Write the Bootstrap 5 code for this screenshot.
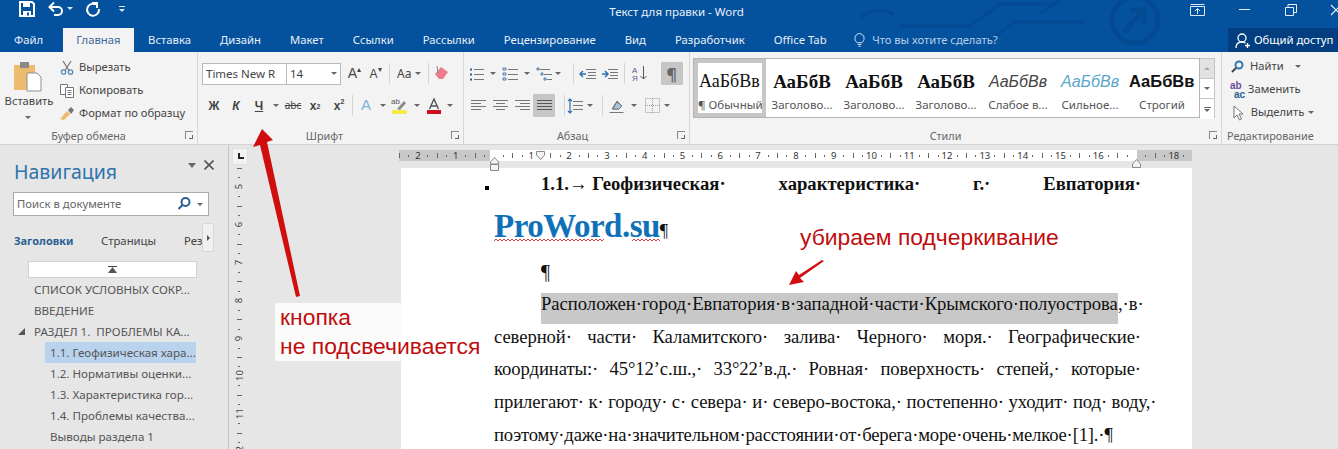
<!DOCTYPE html>
<html lang="ru"><head><meta charset="utf-8"><title>Текст для правки - Word</title>
<link rel="stylesheet" href="https://cdn.jsdelivr.net/npm/bootstrap@5.3.0/dist/css/bootstrap.min.css">
<style>
html,body{margin:0;width:1338px;height:449px;overflow:hidden;background:#e6e6e6;font-family:"Noto Sans","Open Sans",sans-serif;font-size:11.2px;color:#444}
.app{position:relative;width:1338px;height:449px;overflow:hidden}
.hdr{position:relative;height:52px;background:#04519d;color:#e9f0f8}
.hdr-art{position:absolute;left:0;top:0;pointer-events:none}
.trow{position:relative;height:26px}
.qat{width:200px;padding:0 0 9px 19px;gap:12px}
.ttl{flex:1;text-align:center;font-size:11.5px;line-height:23px;padding-left:3px}
.winb{width:188px}
.winb span{position:absolute;top:1px}
.tabs{position:relative;height:26px;padding-top:2px;font-size:11.3px;line-height:24px}
.wt{padding:0 14.5px;white-space:nowrap}
.wt-a{background:#f3f3f3;color:#3f6a9a;padding:0 13px;margin-left:5.5px}
.ask{color:#b8d0ea;margin-left:13px;gap:7px;font-size:11.2px}
.share{position:absolute;right:0;top:2px;width:110px;height:24px;background:#033f80;color:#fff;gap:3px;padding-left:7px}
.rib{height:93px;background:#f3f3f3;border-bottom:1px solid #d2d2d2;color:#444}
.grp{position:relative;height:92px;border-right:1px solid #d6d6d6}
.glbl{position:absolute;left:0;right:0;bottom:1px;text-align:center;line-height:15px;color:#666;font-size:10.8px}
.lnch{position:absolute;right:4px;bottom:5px;width:8px;height:8px;border-left:1px solid #888;border-top:1px solid #888}
.lnch::after{content:"";position:absolute;right:0;bottom:0;width:4px;height:4px;border-right:1px solid #666;border-bottom:1px solid #666}
.cdd{display:inline-block;width:0;height:0;border-left:3px solid transparent;border-right:3px solid transparent;border-top:3px solid #666}
.clip-l{width:56px;padding-top:8px}
.clip-r{padding-top:4px;gap:0}
.cr{height:23px;gap:5px;white-space:nowrap}
.cr svg{flex:none}
.frow{height:23px;align-items:center}
.combo{height:22px;background:#fff;border:1px solid #b9b9b9;line-height:20px;padding:0 3px;white-space:nowrap;overflow:hidden}
.cell{display:flex;flex:none;align-items:center;justify-content:center;height:22px;white-space:nowrap}
.vsep{flex:none;width:1px;height:21px;background:#d4d4d4}
.on{background:#c6c6c6}
.bi{font-weight:700;font-size:12px;color:#444;font-family:"Liberation Sans",sans-serif}
.galy{height:60px;margin-top:6px;background:#fff;border:1px solid #b5b5b5;overflow:hidden;width:507px}
.sty{flex:none;width:72px;height:58px;padding-top:6px;text-align:center;overflow:hidden;white-space:nowrap;border:3px solid transparent}
.sty-s{border:4px solid #c6c6c6;width:72px;padding-top:5px}
.pv{height:28px;line-height:27px;font-size:15px;color:#111;font-family:"Liberation Serif",serif;overflow:hidden}
.pv-n{font-size:18px;text-align:left;padding-left:1px}
.pv-b{font-weight:700;font-size:19px}
.pv-i{font-style:italic;font-family:"Liberation Sans",sans-serif;font-size:16px;color:#444}
.pv-c{font-style:italic;font-family:"Liberation Sans",sans-serif;font-size:16px;color:#5ba8cc}
.pv-s{font-weight:700;font-family:"Liberation Sans",sans-serif;font-size:16.500px;text-align:left}
.lb{line-height:16px;font-size:11.5px;color:#555;margin-top:1px}
.scr{width:15px;margin-top:6px;height:60px;border:1px solid #c6c6c6;border-left:0}
.scr>div{height:20px;border-bottom:1px solid #c6c6c6;display:flex;align-items:center;justify-content:center;background:#fff}
.scr>div:first-child{background:#e2e2e2}
.scr>div:last-child{border-bottom:0}
.work{height:304px}
.navp{width:229px;flex:none;border-right:1px solid #c4c4c4;padding:14px 0 0 0;color:#444;font-size:11px}
.navt{font-size:19.5px;line-height:26px;color:#2f74ab;padding-left:14px;height:33px}
.navx{position:absolute;left:188px;top:15px;gap:8px}
.srch{margin-left:13px;width:196px;height:24px;background:#fff;border:1px solid #aaa;padding:0 5px 0 3px;font-size:11.3px;color:#666}
.navtabs{margin-top:15px;height:20px;padding-left:14px;line-height:20px;font-size:11.3px;position:relative}
.navtabs b{color:#2b5f94;width:87px;font-weight:700;font-size:11px}
.nchev{position:absolute;left:202px;top:-8px;width:12px;height:29px;background:#f0f0f0;border:1px solid #d8d8d8;display:flex;align-items:center;justify-content:center}
.upbx{margin:10px 0 0 28px;width:169px;height:17px;background:#fff;border:1px solid #d0d0d0;display:flex;align-items:center;justify-content:center}
.ti{height:21px;line-height:21px;white-space:nowrap;font-size:11.6px;color:#555}
.ti1{padding-left:34px}
.ti2{margin-left:45px;padding-left:5px;width:151px}
.ti-sel{background:#b9d2ee}
.tw{position:absolute;left:18px;margin-top:7px;width:0;height:0;border-bottom:7px solid #555;border-left:7px solid transparent}
.vrul{width:20px;flex:none;margin-left:3px;position:relative}
.vcor{width:16px;height:17px;margin-top:3px;background:#f2f2f2;border:1px solid #dfdfdf;position:relative}
.vcor::after{content:"";position:absolute;left:5px;top:4px;width:6px;height:6px;border-left:2px solid #222;border-bottom:2px solid #222}
.vbar{margin-top:3px;width:14px;margin-left:0;height:290px}
.vc{height:37.8px;display:flex;align-items:center;justify-content:center;
 background:linear-gradient(#666,#666) center 0/5px 1px no-repeat,linear-gradient(#666,#666) center 9.45px/2px 1px no-repeat,linear-gradient(#666,#666) center 28.35px/2px 1px no-repeat}
.vc span{transform:rotate(-90deg);font-size:9.5px;line-height:9px;color:#444;display:block}
.dwrap{position:absolute;left:399px;top:145px;width:793px}
.hr-b{position:relative;height:11px;margin-top:5px;overflow:hidden;
 background:linear-gradient(to right,#c8c8c8 91px,#fff 91px,#fff 738px,#c8c8c8 738px)}
.hc{flex:none;width:37.8px;height:11px;text-align:center;font-size:9.5px;line-height:11px;color:#333;
 background:linear-gradient(#666,#666) 0 center/1px 5px no-repeat,linear-gradient(#666,#666) 9.45px center/1px 2px no-repeat,linear-gradient(#666,#666) 28.35px center/1px 2px no-repeat}
.mk{position:absolute}
.pg{margin:7px 0 0 2px;height:290px;background:#fff;padding:0 51px 0 93px;font-family:"Liberation Serif",serif;color:#111;position:relative}
.ln{height:32.7px;line-height:32.7px;font-size:18.67px;text-align:justify;text-align-last:justify;white-space:nowrap;letter-spacing:-.09px}
.ln1{height:32px;line-height:32px;font-weight:700;letter-spacing:0}
.lead-run{display:inline-block;white-space:pre;text-align-last:left}
.ln-end{text-align-last:left;letter-spacing:-.18px}
.ind{padding-left:47px}
.brand{height:57px;line-height:52px;text-align:left;text-align-last:left;font-size:33px;font-weight:700;color:#0f72b8;letter-spacing:-.5px;position:relative}
.brand i{font-style:normal;font-size:18.67px;color:#111;font-weight:400;letter-spacing:0}
.wav{position:absolute;left:0;top:38px}
.para{height:31px;line-height:31px;font-size:20px;padding-left:47px}
.hl{background:#c8c8c8;display:block;margin-top:5px;height:31px;line-height:22px;width:577px;flex:none;letter-spacing:-.03px}
.note{position:absolute;font-family:"Liberation Sans",sans-serif;color:#c00d0d;font-size:22.9px;line-height:29px;white-space:nowrap}
.nbox{left:275px;top:303px;width:127px;height:58px;background:#fbfbfb;padding-left:5px}
.nup{left:800px;top:223px}
.ovl{position:absolute;left:0;top:0;pointer-events:none}
</style></head>
<body>
<div class="app">
<div class="hdr">
 <svg class="hdr-art" width="1338" height="52" fill="none" stroke="#044a93" stroke-width="3"><path d="M860 18c8-9 24-10 34-3M900 26h70l30-22h50M990 40l24-18h70M1040 14l20-14"/><circle cx="1135" cy="20" r="23" stroke-width="5"/><path d="M1124 32l20-22M1130 10h14v14" stroke-width="5"/></svg>
 <div class="trow d-flex">
  <div class="qat d-flex align-items-center">
   <svg width="16" height="16" viewBox="0 0 16 16"><path d="M1 1h12l2 2v12H1z" fill="none" stroke="#fff" stroke-width="2"/><path d="M4 1h7v5H4zM4 10h8v5H4z" fill="#fff"/><rect x="8" y="11.500" width="2" height="3" fill="#04519d"/></svg>
   <span class="d-flex align-items-center" style="gap:3px"><svg width="17" height="16" viewBox="0 0 17 16" fill="none" stroke="#fff" stroke-width="2"><path d="M3 6h8a4 4 0 0 1 0 8H7"/><path d="M7 1.500L2.500 6 7 10.500"/></svg><i class="cdd" style="border-top-color:#dbe6f2"></i></span>
   <svg width="16" height="16" viewBox="0 0 16 16" fill="none" stroke="#fff" stroke-width="2"><path d="M11 3.500a6 6 0 1 0 3 4.500"/><path d="M7 2h5v5"/></svg>
   <span class="d-flex flex-column align-items-center ms-2" style="gap:2px"><i style="width:6px;height:1px;background:#dbe6f2"></i><i class="cdd" style="border-top-color:#dbe6f2"></i></span>
  </div>
  <div class="ttl">Текст для правки - Word</div>
  <div class="winb">
   <span style="left:1190px"><svg width="15" height="14" viewBox="0 0 15 14" fill="none" stroke="#dfe9f4"><path d="M.5 3.500h14v9H.5zM.5 1.500h14M7.500 11V6M5 8l2.500-2.500L10 8"/></svg></span>
   <span style="left:1239px;top:9px;width:11px;height:1px;background:#e8eef6"></span>
   <span style="left:1285px"><svg width="12" height="14" viewBox="0 0 12 14" fill="none" stroke="#e8eef6"><path d="M.5 4.500h8v8h-8zM3 4V1.500h8.500v8H9"/></svg></span>
   <span style="left:1330px"><svg width="12" height="14" viewBox="0 0 12 14" fill="none" stroke="#e8eef6" stroke-width="1.200"><path d="M1 2l10 10M11 2L1 12"/></svg></span>
  </div>
 </div>
 <div class="tabs d-flex">
  <div class="wt" style="padding-left:14px">Файл</div><div class="wt wt-a">Главная</div><div class="wt">Вставка</div><div class="wt">Дизайн</div><div class="wt">Макет</div><div class="wt">Ссылки</div><div class="wt">Рассылки</div><div class="wt">Рецензирование</div><div class="wt">Вид</div><div class="wt">Разработчик</div><div class="wt">Office Tab</div>
  <div class="ask d-flex align-items-center"><svg width="11" height="16" viewBox="0 0 12 16" fill="none" stroke="#e9f0f8"><path d="M3.500 11C2 9.500 1 8.500 1 6a5 5 0 0 1 10 0c0 2.500-1 3.500-2.500 5zM4 13h4M5 15h2"/></svg><span>Что вы хотите сделать?</span></div>
  <div class="share d-flex align-items-center"><svg width="16" height="17" viewBox="0 0 16 17" fill="none" stroke="#fff" stroke-width="1.300"><circle cx="7" cy="6" r="4"/><path d="M1 16c0-4 2.500-6 6-6 1.500 0 2.500.4 3.500 1M12.500 11v5M10 13.500h5"/></svg><span>Общий доступ</span></div>
 </div>
</div>

<div class="rib d-flex">
 <div class="grp d-flex" style="width:198px;flex:none">
  <div class="clip-l d-flex flex-column align-items-center">
   <svg width="30" height="32" viewBox="0 0 30 32"><rect x="1" y="5" width="21" height="25" fill="#edbb6d"/><rect x="7" y="2" width="9" height="6" fill="#8a8a8a"/><path d="M14 13h10l4 4v14H14z" fill="#fff" stroke="#8e8e8e"/></svg>
   <div style="margin-top:1px;line-height:16px;white-space:nowrap;padding-left:2px">Вставить</div>
   <i class="cdd" style="margin-top:7px"></i>
  </div>
  <div class="clip-r d-flex flex-column" style="padding-left:4px">
   <div class="cr d-flex align-items-center"><svg width="14" height="15" viewBox="0 0 14 15" fill="none" stroke="#5a87b5" stroke-width="1.300"><circle cx="3.500" cy="12" r="2.200"/><circle cx="10.500" cy="12" r="2.200"/><path d="M5 10.500L11 1M9 10.500L3 1" stroke="#777"/></svg><span>Вырезать</span></div>
   <div class="cr d-flex align-items-center"><svg width="14" height="15" viewBox="0 0 14 15" fill="#fff" stroke="#777"><path d="M.5 1.500h7v10h-7z"/><path d="M5.500 4.500h8v10h-8zM7.500 7.500h4M7.500 9.500h4M7.500 11.500h4"/></svg><span>Копировать</span></div>
   <div class="cr d-flex align-items-center"><svg width="14" height="15" viewBox="0 0 14 15"><path d="M7 5l3 3-6 6-4-1z" fill="#edbb6d"/><path d="M8 4l3-3 3 3-3 4z" fill="#777"/></svg><span>Формат по образцу</span></div>
  </div>
  <div class="glbl" style="padding-right:20px">Буфер обмена</div><i class="lnch"></i>
 </div>

 <div class="grp" style="width:266px;flex:none;padding:10px 0 0 4px">
  <div class="frow d-flex">
   <div class="combo" style="width:85px;color:#444;font-size:11.500px">Times New R</div>
   <div class="combo d-flex align-items-center justify-content-between" style="width:55px;margin-left:-1px;font-size:11.500px"><span>14</span><i class="cdd"></i></div>
   <div class="cell bi" style="width:21px;margin-left:3px;font-size:14px;font-weight:400">A<sup style="font-size:8px">▴</sup></div>
   <div class="cell bi" style="width:21px;font-size:12px;font-weight:400">A<sup style="font-size:8px">▾</sup></div>
   <div class="vsep ms-1"></div>
   <div class="cell" style="width:38px;gap:3px;font-size:12px">Aa<i class="cdd"></i></div>
   <div class="vsep"></div>
   <div class="cell" style="width:24px"><svg width="16" height="15" viewBox="0 0 16 15"><path d="M2 8l6-7 7 5-5 7H6z" fill="#ee7c8c"/><path d="M4 0l1 7" stroke="#888"/></svg></div>
  </div>
  <div class="frow d-flex" style="margin-top:9px;padding-left:2px">
   <div class="cell bi" style="width:20px">Ж</div>
   <div class="cell bi" style="width:24px;font-style:italic">К</div>
   <div class="cell bi" style="width:22px;text-decoration:underline">Ч</div>
   <div class="cell" style="width:12px"><i class="cdd"></i></div>
   <div class="cell" style="width:22px;text-decoration:line-through;font-size:10px">abc</div>
   <div class="cell bi" style="width:22px">x<sub style="font-size:7px">2</sub></div>
   <div class="cell bi" style="width:26px">x<sup style="font-size:7px">2</sup></div>
   <div class="vsep"></div>
   <div class="cell bi" style="width:26px;color:#7eb4dc;font-size:15px;font-weight:400">A</div>
   <div class="cell" style="width:8px"><i class="cdd"></i></div>
   <div class="cell" style="width:22px;margin-left:1px"><svg width="17" height="17" viewBox="0 0 17 17"><rect x="1" y="13" width="15" height="4" fill="#f4ec45"/><text x="0" y="7" font-size="8" font-family="Liberation Sans" fill="#555">ab</text><path d="M6 12l7-8 2 2-6 7z" fill="#888"/></svg></div>
   <div class="cell" style="width:12px;margin-left:1px"><i class="cdd"></i></div>
   <div class="cell" style="width:22px"><svg width="16" height="16" viewBox="0 0 16 16"><rect x="1" y="12" width="14" height="4" fill="#c8101c"/><path d="M3.500 11L8 1l4.500 10M5 8h6" fill="none" stroke="#555" stroke-width="1.400"/></svg></div>
   <div class="cell" style="width:10px"><i class="cdd"></i></div>
  </div>
  <div class="glbl" style="padding-right:12px">Шрифт</div><i class="lnch"></i>
 </div>

 <div class="grp" style="width:226px;flex:none;padding:10px 0 0 3px">
  <div class="frow d-flex">
   <div class="cell" style="width:19px"><svg width="16" height="14" fill="none" stroke="#777"><path d="M5 2.500h10M5 7.500h10M5 12.500h10"/><path d="M1 2.500h2M1 7.500h2M1 12.500h2" stroke="#2b5f94" stroke-width="2"/></svg></div>
   <div class="cell" style="width:14px"><i class="cdd"></i></div>
   <div class="cell" style="width:20px"><svg width="16" height="14" fill="none" stroke="#777"><path d="M6 2.500h10M6 7.500h10M6 12.500h10"/><path d="M1 1h3v2H1zM1 6h3v2H1zM1 11h3v2H1z" stroke="#2b5f94" stroke-width=".8"/></svg></div>
   <div class="cell" style="width:14px"><i class="cdd"></i></div>
   <div class="cell" style="width:20px"><svg width="17" height="14" fill="none" stroke="#777"><path d="M4 2.500h10M8 7.500h8M11 12.500h5"/><path d="M1 1h2v2H1zM5 6h2v2H5zM8 11h2v2H8z" stroke="#2b5f94" stroke-width=".8"/></svg></div>
   <div class="cell" style="width:8px"><i class="cdd"></i></div>
   <div class="vsep" style="margin-left:11px"></div>
   <div class="cell ms-1" style="width:22px"><svg width="18" height="14" fill="none" stroke="#777"><path d="M7 2.500h10M9 5.500h8M9 8.500h8M7 11.500h10"/><path d="M1 7h6M4 4L1 7l3 3" stroke="#2b72b5" stroke-width="1.500"/></svg></div>
   <div class="cell" style="width:22px"><svg width="18" height="14" fill="none" stroke="#777"><path d="M7 2.500h10M9 5.500h8M9 8.500h8M7 11.500h10"/><path d="M1 7h6M4 4l3 3-3 3" stroke="#2b72b5" stroke-width="1.500"/></svg></div>
   <div class="vsep ms-1"></div>
   <div class="cell" style="width:27px;margin-left:2px"><svg width="16" height="18" viewBox="0 0 16 18" style="overflow:visible"><text x="0" y="8" font-size="8" font-family="Liberation Sans" fill="#6b4e9b">А</text><text x="0" y="16" font-size="8" font-family="Liberation Sans" fill="#6b4e9b">Я</text><path d="M11.500 1v13M8.500 11l3 3 3-3" fill="none" stroke="#555"/></svg></div>
   <div class="cell on" style="width:22px;height:23px;margin-left:7px;font-size:16px;color:#666;font-weight:700">¶</div>
  </div>
  <div class="frow d-flex" style="margin-top:9px;padding-left:1px">
   <div class="cell" style="width:21px"><svg width="15" height="13" stroke="#777" fill="none"><path d="M0 1.500h15M0 4.500h10M0 7.500h15M0 10.500h10"/></svg></div>
   <div class="cell" style="width:22px"><svg width="15" height="13" stroke="#777" fill="none"><path d="M0 1.500h15M3 4.500h9M0 7.500h15M3 10.500h9"/></svg></div>
   <div class="cell" style="width:22px"><svg width="15" height="13" stroke="#777" fill="none"><path d="M0 1.500h15M5 4.500h10M0 7.500h15M5 10.500h10"/></svg></div>
   <div class="cell on" style="width:22px;height:23px"><svg width="15" height="13" stroke="#555" fill="none"><path d="M0 1.500h15M0 4.500h15M0 7.500h15M0 10.500h15"/></svg></div>
   <div class="vsep" style="margin-left:9px"></div>
   <div class="cell" style="width:18px;margin-left:1px"><svg width="16" height="16" fill="none" stroke="#777"><path d="M6 3.500h10M6 7.500h10M6 11.500h10"/><path d="M3 1v14M1 3l2-2 2 2M1 13l2 2 2-2" stroke="#2b72b5" stroke-width="1.200"/></svg></div>
   <div class="cell" style="width:12px"><i class="cdd"></i></div>
   <div class="vsep" style="margin-left:6px"></div>
   <div class="cell" style="width:27px"><svg width="17" height="16" fill="none" stroke="#777"><path d="M1.500 14.500h14M4 11l5-8 5 5-3 3z"/><path d="M9 4l5 4-3 3H5z" fill="#a8c6e2"/></svg></div>
   <div class="cell" style="width:8px"><i class="cdd"></i></div>
   <div class="cell" style="width:16px;margin-left:6px"><svg width="15" height="15" fill="none" stroke="#999" stroke-dasharray="1 1"><path d="M.5.500h14v14H.5zM7.500 0v15M0 7.500h15"/></svg></div>
   <div class="cell ms-1" style="width:8px"><i class="cdd"></i></div>
  </div>
  <div class="glbl" style="padding-right:8px">Абзац</div><i class="lnch"></i>
 </div>

 <div class="grp d-flex" style="width:532px;flex:none;padding-left:3px">
  <div class="galy d-flex">
   <div class="sty sty-s"><div class="pv pv-n">АаБбВв</div><div class="lb">¶ Обычный</div></div>
   <div class="sty"><div class="pv pv-b">АаБбВ</div><div class="lb">Заголово...</div></div>
   <div class="sty"><div class="pv pv-b">АаБбВ</div><div class="lb">Заголово...</div></div>
   <div class="sty"><div class="pv pv-b">АаБбВ</div><div class="lb">Заголово...</div></div>
   <div class="sty"><div class="pv pv-i">АаБбВв</div><div class="lb">Слабое в...</div></div>
   <div class="sty"><div class="pv pv-c">АаБбВв</div><div class="lb">Сильное...</div></div>
   <div class="sty"><div class="pv pv-s">АаБбВв</div><div class="lb">Строгий</div></div>
  </div>
  <div class="scr"><div><i class="cdd" style="border-top:0;border-bottom:3px solid #aaa"></i></div><div><i class="cdd"></i></div><div class="flex-column" style="gap:1px"><i style="width:7px;height:1px;background:#666"></i><i class="cdd"></i></div></div>
  <div class="glbl" style="padding-right:20px">Стили</div><i class="lnch"></i>
 </div>

 <div class="grp flex-fill" style="border:0;padding:3px 0 0 8px">
  <div class="cr d-flex align-items-center" style="gap:6px"><svg width="14" height="14" viewBox="0 0 14 14" fill="none"><circle cx="9" cy="5" r="3.500" stroke="#3276b5" stroke-width="2"/><path d="M6 8l-4 4" stroke="#444" stroke-width="2"/></svg><span>Найти</span><i class="cdd ms-2"></i></div>
  <div class="cr d-flex align-items-center" style="gap:1px"><svg width="17" height="18" viewBox="0 0 17 18"><text x="0" y="8" font-size="10" font-weight="700" font-family="Liberation Sans" fill="#6b4e9b">ab</text><text x="4" y="17" font-size="10" font-weight="700" font-family="Liberation Sans" fill="#2b5f94">ac</text></svg><span>Заменить</span></div>
  <div class="cr d-flex align-items-center" style="gap:4px"><svg width="14" height="16" viewBox="0 0 14 16" fill="#fff" stroke="#777" class="ms-1"><path d="M1 1v12l3-3 2.500 5 2-1-2.500-5h4z"/></svg><span>Выделить</span><i class="cdd"></i></div>
  <div class="glbl" style="text-align:left;padding-left:5px">Редактирование</div>
 </div>
</div>

<div class="work d-flex">
 <div class="navp position-relative">
  <div class="navt">Навигация</div>
  <div class="navx d-flex align-items-center"><i class="cdd" style="border-left-width:4px;border-right-width:4px;border-top-width:5px"></i><svg width="10" height="10" fill="none" stroke="#555" stroke-width="1.600"><path d="M.5.500l9 9M9.500.500l-9 9"/></svg></div>
  <div class="srch d-flex align-items-center justify-content-between"><span>Поиск в документе</span><span class="d-flex align-items-center" style="gap:6px"><svg width="14" height="14" viewBox="0 0 14 14" fill="none"><circle cx="8.500" cy="5" r="4" stroke="#2b5f94" stroke-width="2"/><path d="M5.500 8l-4 4" stroke="#2b5f94" stroke-width="2"/></svg><i class="cdd"></i></span></div>
  <div class="navtabs d-flex"><b>Заголовки</b><span style="width:83px">Страницы</span><span>Рез</span><div class="nchev"><i style="border-left:3px solid #555;border-top:3px solid transparent;border-bottom:3px solid transparent"></i></div></div>
  <div class="upbx"><svg width="9" height="8" viewBox="0 0 9 8"><path d="M0 .500h9" stroke="#444"/><path d="M4.500 1L9 7H0z" fill="#555"/></svg></div>
  <div class="ti ti1" style="margin-top:1px">СПИСОК УСЛОВНЫХ СОКР...</div>
  <div class="ti ti1">ВВЕДЕНИЕ</div>
  <div class="ti ti1"><i class="tw"></i>РАЗДЕЛ 1.&nbsp; ПРОБЛЕМЫ КА...</div>
  <div class="ti ti2 ti-sel">1.1. Геофизическая хара...</div>
  <div class="ti ti2">1.2. Нормативы оценки...</div>
  <div class="ti ti2">1.3. Характеристика гор...</div>
  <div class="ti ti2">1.4. Проблемы качества...</div>
  <div class="ti ti2">Выводы раздела 1</div>
 </div>
 <div class="vrul">
  <div class="vcor"></div>
  <div class="vbar"><div class="vc"><span>5</span></div><div class="vc"><span>6</span></div><div class="vc"><span>7</span></div><div class="vc"><span>8</span></div><div class="vc"><span>9</span></div><div class="vc"><span>10</span></div><div class="vc"><span>11</span></div><div class="vc"><span>12</span></div></div>
 </div>
 <div class="dwrap">
  <div class="hr-b d-flex">
   <div class="hc">2</div><div class="hc">1</div><div class="hc"></div><div class="hc">1</div><div class="hc">2</div><div class="hc">3</div><div class="hc">4</div><div class="hc">5</div><div class="hc">6</div><div class="hc">7</div><div class="hc">8</div><div class="hc">9</div><div class="hc">10</div><div class="hc">11</div><div class="hc">12</div><div class="hc">13</div><div class="hc">14</div><div class="hc">15</div><div class="hc">16</div><div class="hc"></div><div class="hc">18</div>
  </div>
  <div class="pg">
   <div class="ln ln1 ind"><span class="lead-run">1.1.→ Геофизическая·</span> характеристика· г.· Евпатория·</div>
   <div class="ln brand">ProWord.su<i>¶</i><svg class="wav" width="170" height="5" fill="none" stroke="#d8403f" stroke-width="1"><path d="M0 3l2-2 2 2 2-2 2 2 2-2 2 2 2-2 2 2 2-2 2 2 2-2 2 2 2-2 2 2 2-2 2 2 2-2 2 2 2-2 2 2 2-2 2 2 2-2 2 2 2-2 2 2 2-2 2 2 2-2 2 2 2-2 2 2 2-2 2 2 2-2 2 2 2-2 2 2 2-2 2 2 2-2 2 2 2-2 2 2 2-2 2 2 2-2 2 2 2-2 2 2 2-2 2 2 2-2 2 2 2-2M138 3l2-2 2 2 2-2 2 2 2-2 2 2 2-2 2 2 2-2 2 2 2-2 2 2 2-2 2 2"/></svg></div>
   <div class="para">¶</div>
   <div class="ln ind d-flex justify-content-between" style="text-align-last:left"><span class="hl">Расположен·город·Евпатория·в·западной·части·Крымского·полуострова</span><span>,·в·</span></div>
   <div class="ln">северной· части· Каламитского· залива· Черного· моря.· Географические·</div>
   <div class="ln">координаты:· 45°12’с.ш.,· 33°22’в.д.· Ровная· поверхность· степей,· которые·</div>
   <div class="ln">прилегают· к· городу· с· севера· и· северо-востока,· постепенно· уходит· под· воду,·</div>
   <div class="ln ln-end">поэтому·даже·на·значительном·расстоянии·от·берега·море·очень·мелкое·[1].·¶</div>
  </div>
  <div class="mk" style="left:91px;top:10px"><svg width="10" height="14" fill="#f3f3f3" stroke="#888"><path d="M.5 5L4.500.5 8.500 5v2h-8zM.5 7.500h8v6h-8z"/></svg></div>
  <div class="mk" style="left:137px;top:2px"><svg width="10" height="10" fill="#f3f3f3" stroke="#888"><path d="M.5.500h8V4L4.500 8.500.5 4z"/></svg></div>
  <div class="mk" style="left:733px;top:9px"><svg width="10" height="9" fill="#f3f3f3" stroke="#888"><path d="M.5 8.500V5L4.500.5 8.500 5v3.500z"/></svg></div>
 </div>
</div>

<div class="note nbox">кнопка<br>не подсвечивается</div>
<div class="note nup">убираем подчеркивание</div>
<svg class="ovl" width="1338" height="449">
 <rect x="485" y="186" width="4" height="4" fill="#000"/>
 <path d="M262 129l11 11-6 2 33 154-4 1-36-152-7 2z" fill="#d10e0e"/>
 <path d="M824 261l-24 17 4 4-15 3 7-14 3 4 23-15z" fill="#d10e0e"/>
</svg>
</div>
<script src="https://cdn.jsdelivr.net/npm/bootstrap@5.3.0/dist/js/bootstrap.bundle.min.js"></script>
</body></html>
